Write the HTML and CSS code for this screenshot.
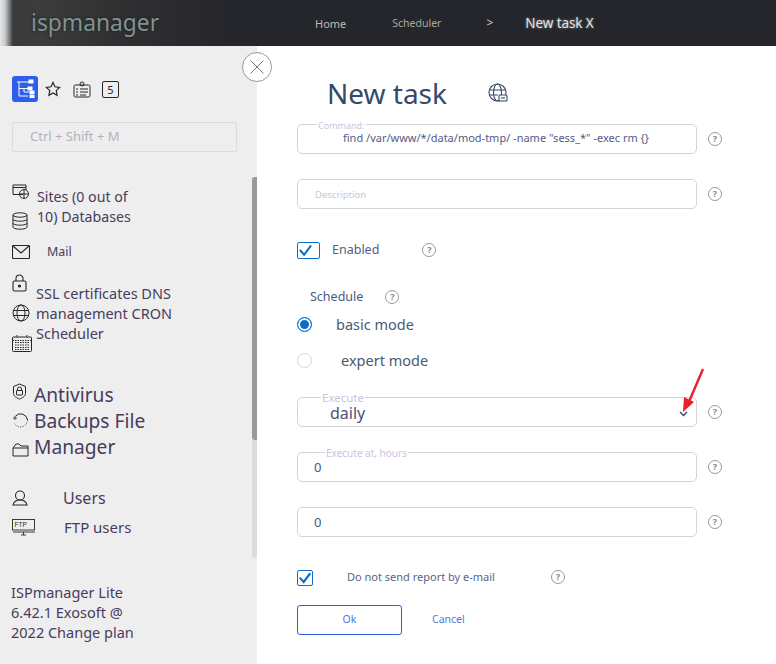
FILE: index.html
```html
<!DOCTYPE html>
<html>
<head>
  <meta charset="UTF-8">
  <title>New task - ispmanager</title>
  <link rel="stylesheet" href="styles.css">
</head>
<body>
  <div class="topbar">
    <div class="logo">ispmanager</div>
    <div class="crumbs">
      <span class="crumb-home">Home</span>
      <span class="crumb-sched">Scheduler</span>
      <span class="crumb-sep">&gt;</span>
      <span class="crumb-tab">New task X</span>
    </div>
  </div>

  <div class="layout">
    <div class="sidebar">
      <div class="tabs">
        <div class="tab-active">
          <svg width="22" height="22" viewBox="0 0 22 22" fill="none" stroke="#fff" stroke-width="1"><path d="M3 4h13M5 4v14h9M5 10.500h10M10 10.500v3.500h5"/><rect x="15" y="2" width="4" height="3" fill="#fff"/><rect x="14" y="9" width="4" height="3" fill="#fff"/><rect x="16" y="13" width="4" height="2.500" fill="#fff"/><rect x="16" y="17" width="4" height="2.500" fill="#fff"/></svg>
        </div>
        <svg class="tab-star" width="16" height="16" viewBox="0 0 16 16" fill="none" stroke="#25262b" stroke-width="1.200"><path d="M8 1.500l2 4.300 4.600.6-3.400 3.200.9 4.700L8 12l-4.100 2.300.9-4.700L1.400 6.400 6 5.800z"/></svg>
        <svg class="tab-card" width="18" height="17" viewBox="0 0 18 17" fill="none" stroke="#25262b" stroke-width="1"><rect x="1" y="4" width="16" height="12" rx="1.500"/><circle cx="9" cy="3" r="2"/><path d="M3 8h2M7 8h8M3 11h2M7 11h8M3 14h2M7 14h6"/></svg>
        <div class="tab-num">5</div>
      </div>

      <div class="search">Ctrl + Shift + M</div>

      <div class="nav-group group-sites">
        <div class="nav-icons">
          <svg class="ico-site" width="18" height="16" viewBox="0 0 18 16" fill="none" stroke="#25262b"><path d="M11 10.500H1V1h13v5M1 3.500h13"/><circle cx="12" cy="10" r="4.500"/><path d="M7.500 10h9M12 5.500v9"/></svg>
          <svg class="ico-db" width="16" height="18" viewBox="0 0 16 18" fill="none" stroke="#25262b"><ellipse cx="8" cy="3" rx="7" ry="2.200"/><path d="M1 3v12c0 1.200 3 2.200 7 2.200s7-1 7-2.200V3M1 7c0 1.200 3 2.200 7 2.200S15 8.200 15 7M1 11c0 1.200 3 2.200 7 2.200s7-1 7-2.200"/></svg>
        </div>
        <div class="nav-text text-sites">Sites (0 out of 10) Databases</div>
      </div>

      <div class="nav-group group-mail">
        <svg width="18" height="14" viewBox="0 0 18 14" fill="none" stroke="#25262b" stroke-width="1.100"><rect x="0.500" y="0.500" width="17" height="13" rx="1"/><path d="M1 1l8 7 8-7"/></svg>
        <div class="nav-text text-mail">Mail</div>
      </div>

      <div class="nav-group group-ssl">
        <div class="nav-icons">
          <svg class="ico-lock" width="15" height="18" viewBox="0 0 15 18" fill="none" stroke="#25262b" stroke-width="1.100"><rect x="1" y="7" width="13" height="10" rx="1.500"/><path d="M4 7V4.500a3.500 3.500 0 0 1 7 0V7"/><circle cx="7.500" cy="12" r="1" fill="#25262b"/></svg>
          <svg class="ico-globe" width="19" height="18" viewBox="0 0 19 18" fill="none" stroke="#25262b"><circle cx="9" cy="9" r="8"/><ellipse cx="9" cy="9" rx="4" ry="8"/><path d="M1 6.500h16M1 11.500h16"/></svg>
          <svg class="ico-cal" width="20" height="17" viewBox="0 0 20 17" fill="none" stroke="#25262b"><rect x="0.500" y="2" width="19" height="14.500" rx="1"/><path d="M0.500 5.500h19M3 7.500h14M3 10h14M3 12.500h14M3 14.500h14M5 0v3M15 0v3" stroke-dasharray="1.500 1"/></svg>
        </div>
        <div class="nav-text text-ssl">SSL certificates DNS management CRON Scheduler</div>
      </div>

      <div class="nav-group group-antivirus">
        <div class="nav-icons">
          <svg class="ico-shield" width="15" height="17" viewBox="0 0 15 17" fill="none" stroke="#25262b"><path d="M7.500 1l6 2.500v7c0 2.500-3 4.500-6 5.500-3-1-6-3-6-5.500v-7z"/><rect x="4.500" y="7.500" width="6" height="4.500" rx="0.500"/><path d="M5.500 7.500V6a2 2 0 0 1 4 0v1.500"/></svg>
          <svg class="ico-backup" width="17" height="17" viewBox="0 0 17 17" fill="none" stroke="#25262b"><path d="M3.500 4a7 7 0 0 1 12 4"/><path d="M15.500 8a7 7 0 0 1-13 3.500" stroke-dasharray="1 1.500"/><path d="M1 6h4M3 4v4" stroke-width="0.800"/></svg>
          <svg class="ico-folder" width="17" height="14" viewBox="0 0 17 14" fill="none" stroke="#25262b"><path d="M1 5v8h15V3H9L7 1H4L1 5h15"/></svg>
        </div>
        <div class="nav-text text-antivirus">Antivirus Backups File Manager</div>
      </div>

      <div class="user-row row-users">
        <svg width="23" height="16" viewBox="0 0 23 16" fill="none" stroke="#25262b" stroke-width="1.100"><circle cx="8" cy="5.500" r="4.500"/><path d="M1 15c1-4 4-5 7-5s6 1 7 5z"/></svg>
        <span class="text-users">Users</span>
      </div>
      <div class="user-row row-ftp">
        <svg width="28" height="17" viewBox="0 0 28 17" fill="none" stroke="#25262b" stroke-width="0.900"><rect x="0.500" y="0.500" width="22" height="10.500"/><path d="M1 13h22M9 16h5M11.500 13v3"/><text x="2.500" y="8" font-size="6.500" fill="#25262b" stroke="none" font-family="Liberation Sans, sans-serif">FTP</text></svg>
        <span class="text-ftp">FTP users</span>
      </div>

      <div class="foot">ISPmanager Lite 6.42.1 Exosoft @ 2022 Change plan</div>

      <div class="scroll-track"><div class="scroll-thumb"></div></div>
    </div>

    <div class="main">
      <div class="close-btn">
        <svg width="16" height="16" viewBox="0 0 16 16" fill="none" stroke="#777" stroke-width="1"><path d="M1.500 1.500l13 13M14.500 1.500l-13 13"/></svg>
      </div>

      <div class="title-row">
        <h1>New task</h1>
        <svg width="20" height="20" viewBox="0 0 20 20" fill="none" stroke="#34496b" stroke-width="1.100"><circle cx="9.500" cy="9.500" r="8.500"/><ellipse cx="9.500" cy="9.500" rx="4" ry="8.500"/><path d="M1 7h17M1 12h9"/><rect x="11" y="12" width="8" height="6" rx="1" fill="#fff"/><path d="M13 15h4"/></svg>
      </div>

      <div class="row row-command">
        <div class="field">
          <span class="legend legend-command">Command:</span>
          <span class="value-command">find /var/www/*/data/mod-tmp/ -name "sess_*" -exec rm {}</span>
        </div>
        <span class="help">?</span>
      </div>

      <div class="row row-desc">
        <div class="field"><span class="placeholder">Description</span></div>
        <span class="help">?</span>
      </div>

      <div class="row row-enabled">
        <div class="check check-wide">
          <svg width="16" height="14" viewBox="0 0 16 14" fill="none" stroke="#0b6fc9" stroke-width="2.200"><path d="M2 6l4.500 5L14 1"/></svg>
        </div>
        <span class="label-enabled">Enabled</span>
        <span class="help help-enabled">?</span>
      </div>

      <div class="row row-schedule">
        <span class="label-schedule">Schedule</span>
        <span class="help help-schedule">?</span>
      </div>

      <div class="row row-basic">
        <span class="radio radio-on"></span>
        <span class="label-basic">basic mode</span>
      </div>
      <div class="row row-expert">
        <span class="radio"></span>
        <span class="label-expert">expert mode</span>
      </div>

      <div class="row row-execute">
        <div class="field field-select">
          <span class="legend legend-execute">Execute</span>
          <span class="value-daily">daily</span>
          <svg class="chevron" width="9" height="6" viewBox="0 0 9 6" fill="none" stroke="#34405c" stroke-width="1.300"><path d="M1 1l3.500 3.500L8 1"/></svg>
        </div>
        <span class="help">?</span>
      </div>

      <div class="row row-hours">
        <div class="field">
          <span class="legend legend-hours">Execute at, hours</span>
          <span class="value-num">0</span>
        </div>
        <span class="help">?</span>
      </div>

      <div class="row row-minutes">
        <div class="field"><span class="value-num">0</span></div>
        <span class="help">?</span>
      </div>

      <div class="row row-report">
        <div class="check check-small">
          <svg width="14" height="13" viewBox="0 0 16 14" fill="none" stroke="#0b6fc9" stroke-width="2.400"><path d="M2 6l4.500 5L14 1"/></svg>
        </div>
        <span class="label-report">Do not send report by e-mail</span>
        <span class="help help-report">?</span>
      </div>

      <div class="row row-buttons">
        <button class="btn-ok">Ok</button>
        <button class="btn-cancel">Cancel</button>
      </div>

      <svg class="arrow" width="24" height="48" viewBox="0 0 24 48" fill="none"><path d="M22 1L7 36" stroke="#e8202c" stroke-width="2.400"/><path d="M2 44l1-15 10 5z" fill="#e8202c"/></svg>
    </div>
  </div>
</body>
</html>
```

FILE: styles.css
```css
* {
  box-sizing: border-box;
}

html, body {
  margin: 0;
  height: 664px;
  overflow: hidden;
}

body {
  font-family: "Noto Sans", "Open Sans", sans-serif;
  background-color: #fff;
}

/* top bar */
.topbar {
  height: 46px;
  display: flex;
  align-items: center;
  background: linear-gradient(90deg, #e4e6e8 0, #c9cccf 5px, #3a3a3a 13px, #3c3c3c 40px, #303032 120px, #25262b 230px);
}

.logo {
  width: 257px;
  padding: 0 0 1px 31px;
  font-size: 22.800px;
  color: #7f9490;
  text-shadow: 0 0 3px #1c1d20;
}

.crumbs {
  display: flex;
  align-items: center;
  font-size: 11px;
  color: #bdbdae;
}

.crumb-home {
  margin-left: 58px;
}

.crumb-sched {
  margin-left: 46px;
  font-size: 10.500px;
  color: #aaaa9b;
}

.crumb-sep {
  margin-left: 45px;
  font-size: 12px;
  color: #ccc;
  transform: translateY(-1px);
}

.crumb-tab {
  margin-left: 32px;
  font-size: 13.500px;
  color: #e4e4e4;
  text-shadow: 0 0 3px #888;
  letter-spacing: -0.100px;
}

/* sidebar */
.layout {
  display: flex;
  height: 618px;
}

.sidebar {
  position: relative;
  width: 257px;
  flex: none;
  padding: 30px 0 0 12px;
  background-color: #eeeeee;
  color: #483c5c;
}

.tabs {
  display: flex;
  align-items: center;
  height: 26px;
}

.tab-active {
  width: 26px;
  height: 26px;
  display: flex;
  align-items: center;
  justify-content: center;
  border-radius: 3px;
  background-color: #2f5ee8;
}

.tab-star {
  margin-left: 7px;
}

.tab-card {
  margin-left: 12px;
}

.tab-num {
  width: 17px;
  height: 17px;
  margin-left: 11px;
  border: 1px solid #25262b;
  border-radius: 2px;
  font-size: 11px;
  line-height: 15px;
  text-align: center;
  color: #25262b;
}

.search {
  width: 225px;
  height: 30px;
  margin-top: 20px;
  padding-left: 17px;
  border: 1px solid #dcdcdc;
  border-radius: 2px;
  font-size: 13px;
  line-height: 27px;
  color: #b2b2bf;
}

.nav-group {
  display: flex;
}

.nav-icons {
  display: flex;
  flex-direction: column;
  width: 24px;
  flex: none;
}

.nav-icons svg {
  flex: none;
}

.nav-text {
  font-size: 14.500px;
  line-height: 20px;
}

.group-sites {
  height: 50px;
  margin-top: 32px;
}

.ico-db {
  margin-top: 12px;
}

.text-sites {
  width: 110px;
  margin: 3px 0 0 1px;
  font-size: 14.200px;
}

.group-mail {
  height: 30px;
  margin-top: 11px;
}

.text-mail {
  margin: -3px 0 0 17px;
  font-size: 12.500px;
}

.group-ssl {
  height: 70px;
  margin-top: -1px;
}

.ico-globe {
  margin-top: 12px;
}

.ico-cal {
  margin-top: 13px;
}

.text-ssl {
  width: 150px;
  margin-top: 9px;
}

.group-antivirus {
  margin-top: 39px;
}

.nav-icons .ico-backup {
  margin-top: 12px;
}

.nav-icons .ico-folder {
  margin-top: 14px;
}

.text-antivirus {
  width: 150px;
  margin: -1px 0 0 -2px;
  font-size: 19.200px;
  line-height: 26px;
}

.user-row {
  display: flex;
  align-items: center;
}

.row-users {
  margin-top: 27px;
  font-size: 16px;
}

.text-users {
  margin-left: 28px;
}

.row-ftp {
  margin-top: 8px;
  font-size: 15px;
}

.text-ftp {
  margin-left: 24px;
}

.foot {
  width: 140px;
  margin: 45px 0 0 -1px;
  font-size: 14.500px;
  line-height: 20px;
}

.scroll-track {
  position: absolute;
  top: 131px;
  right: 0;
  width: 5px;
  height: 381px;
  border-radius: 3px 0 0 3px;
  background-color: #dcdcdc;
}

.scroll-thumb {
  height: 263px;
  border-radius: 3px 0 0 3px;
  background-color: #999;
}

/* form */
.main {
  position: relative;
  flex: 1;
  padding: 28px 0 0 40px;
}

.close-btn {
  position: absolute;
  top: 6px;
  left: -15px;
  width: 30px;
  height: 30px;
  display: flex;
  align-items: center;
  justify-content: center;
  border: 1px solid #999;
  border-radius: 50%;
  background-color: #fff;
}

.title-row {
  display: flex;
  align-items: center;
  height: 38px;
  padding-left: 30px;
}

h1 {
  margin: -1px 41px 0 0;
  font-size: 28px;
  font-weight: 400;
  color: #34496b;
}

.row {
  display: flex;
  align-items: center;
}

.field {
  position: relative;
  display: flex;
  align-items: center;
  width: 400px;
  height: 30px;
  border: 1px solid #d4d4d4;
  border-radius: 5px;
}

.help {
  width: 14px;
  height: 14px;
  margin-left: 11px;
  border: 1px solid #999;
  border-radius: 50%;
  font-size: 9px;
  font-weight: 700;
  line-height: 12px;
  text-align: center;
  color: #888;
}

.legend {
  position: absolute;
  padding: 0 1px;
  background-color: #fff;
  color: #c8c4de;
}

.row-command {
  margin-top: 12px;
}

.legend-command {
  top: -5px;
  left: 19px;
  font-size: 9px;
  line-height: 12px;
}

.value-command {
  margin: -3px 0 0 45px;
  font-size: 11px;
  color: #555b84;
  white-space: nowrap;
}

.row-desc {
  margin-top: 25px;
}

.placeholder {
  margin-left: 17px;
  font-size: 9.500px;
  color: #c8c4de;
}

.row-enabled {
  margin-top: 33px;
}

.check {
  display: flex;
  align-items: center;
  justify-content: center;
  border: 1.500px solid #0b6fc9;
  border-radius: 2px;
}

.check-wide {
  width: 23px;
  height: 17px;
  padding-right: 6px;
}

.label-enabled {
  margin: -2px 0 0 12px;
  font-size: 12.500px;
  color: #555b84;
}

.help-enabled {
  margin: -2px 0 0 43px;
}

.row-schedule {
  margin-top: 29px;
  padding-left: 13px;
}

.label-schedule {
  font-size: 12.500px;
  color: #4a5a80;
}

.help-schedule {
  margin-left: 22px;
}

.row-basic {
  margin-top: 8px;
  height: 22px;
}

.radio {
  width: 15px;
  height: 15px;
  border: 1px solid #d8d8d8;
  border-radius: 50%;
  flex: none;
  margin-top: 1px;
}

.radio-on {
  border: 1.500px solid #0b6fc9;
  box-shadow: inset 0 0 0 2px #fff;
  background-color: #0b6fc9;
}

.label-basic {
  margin-left: 24px;
  font-size: 14.500px;
  color: #4a5a72;
}

.row-expert {
  margin-top: 14px;
  height: 22px;
}

.label-expert {
  margin-left: 29px;
  font-size: 14.500px;
  color: #4a5a72;
}

.row-execute {
  margin-top: 26px;
}

.legend-execute {
  top: -5px;
  left: 23px;
  font-size: 11.500px;
  line-height: 10px;
}

.value-daily {
  margin: 1px 0 0 32px;
  font-size: 16px;
  line-height: 16px;
  color: #4c5278;
}

.chevron {
  position: absolute;
  top: 13px;
  right: 8px;
}

.row-hours {
  margin-top: 25px;
}

.legend-hours {
  top: -7px;
  left: 27px;
  font-size: 10px;
  line-height: 14px;
}

.value-num {
  margin-left: 16px;
  font-size: 13px;
  color: #3c5a8a;
}

.row-minutes {
  margin-top: 25px;
}

.row-report {
  margin-top: 33px;
}

.check-small {
  width: 16px;
  height: 16px;
}

.label-report {
  margin: -3px 0 0 34px;
  font-size: 11px;
  color: #5e6388;
}

.help-report {
  margin: -2px 0 0 56px;
}

.row-buttons {
  margin-top: 19px;
}

.btn-ok {
  width: 105px;
  height: 30px;
  padding-bottom: 3px;
  border: 1px solid #2f5ee0;
  border-radius: 3px;
  background-color: #fff;
  font-family: inherit;
  font-size: 10.500px;
  color: #4f78dc;
}

.btn-cancel {
  margin: -2px 0 0 30px;
  padding: 0;
  border: none;
  background: none;
  font-family: inherit;
  font-size: 10.500px;
  color: #4f78dc;
}

.arrow {
  position: absolute;
  top: 322px;
  left: 424px;
}
```
